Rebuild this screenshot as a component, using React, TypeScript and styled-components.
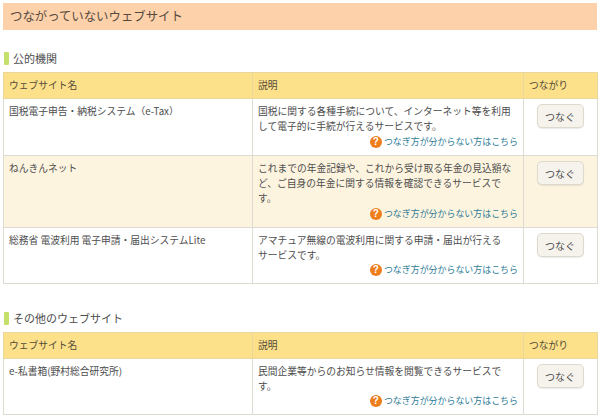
import styled, { createGlobalStyle } from 'styled-components';

const GlobalStyle = createGlobalStyle`
    html, body {
        margin: 0;
        padding: 0;
        background: #fff;
        overflow: hidden;
    }
    body {
        font-family: "Noto Sans CJK JP", "Liberation Sans", sans-serif;
        color: #4d4d4d;
    }
`;

const Wrapper = styled.div`
    width: 600px;
    height: 418px;
    padding: 3px 3px 0 3px;
    box-sizing: border-box;
    overflow: hidden;
`;

const PageTitle = styled.h1`
    margin: 0 0 19px;
    height: 27px;
    padding-left: 7px;
    background: #fdd1a9;
    font-size: 12.4px;
    font-weight: 400;
    line-height: 26px;
    color: #55493f;
`;

const SectionTitle = styled.h2`
    display: flex;
    align-items: center;
    gap: 4px;
    margin: 0;
    height: 23px;
    padding: 0 0 5px 1px;
    box-sizing: border-box;
    font-size: 11px;
    font-weight: 400;
    color: #4d4d4d;
    &::before {
        content: '';
        width: 5px;
        height: 13px;
        border-radius: 1px;
        background: #c5e06a;
    }
`;

const Table = styled.table<{ $gap?: number }>`
    width: 594px;
    margin-bottom: ${(p) => p.$gap ?? 0}px;
    border-collapse: collapse;
    table-layout: fixed;
    font-size: 9.75px;
    line-height: 15px;
`;

const HeadCell = styled.th`
    height: 26px;
    padding: 0 5px;
    box-sizing: border-box;
    background: #fde08a;
    border: 1px solid #e9d79b;
    font-weight: 400;
    text-align: left;
    color: #544b38;
`;

const Row = styled.tr<{ $tint?: boolean; $height: number }>`
    height: ${(p) => p.$height}px;
    background: ${(p) => (p.$tint ? '#fdf4e0' : '#fff')};
`;

const Cell = styled.td`
    padding: 5px 5px 0;
    border: 1px solid #dedbd3;
    vertical-align: top;
    box-sizing: border-box;
`;

const DescCell = styled(Cell)`
    padding: 0 5px;
`;

const DescInner = styled.div<{ $height: number }>`
    display: flex;
    flex-direction: column;
    height: ${(p) => p.$height}px;
    padding-top: 5px;
    box-sizing: border-box;
`;

const DescText = styled.div`
    white-space: pre-line;
`;

const HelpLink = styled.a`
    display: flex;
    align-items: center;
    justify-content: flex-end;
    gap: 2px;
    margin-top: auto;
    margin-bottom: 6px;
    color: #2f7c96;
    font-size: 8.95px;
    line-height: 14px;
`;

const HelpIcon = styled.span`
    display: flex;
    align-items: center;
    justify-content: center;
    width: 12px;
    height: 12px;
    border-radius: 50%;
    background: #ee7d1b;
    color: #fff;
    font-family: "Liberation Sans", sans-serif;
    font-size: 10px;
    font-weight: 700;
    line-height: 12px;
`;

const ButtonCell = styled(Cell)`
    padding: 5px 1px 0 0;
    text-align: center;
`;

const ConnectButton = styled.button`
    width: 47px;
    height: 24px;
    padding: 0;
    border: 1px solid #dcd9cd;
    border-radius: 5px;
    background: #f5f3ec;
    box-shadow: 0 1px 1px rgba(0, 0, 0, 0.08);
    font-family: inherit;
    font-size: 10px;
    color: #4d4d4d;
`;

type Site = {
    name: string;
    desc: string;
    height: number;
    tint?: boolean;
};

const publicSites: Site[] = [
    {
        name: '国税電子申告・納税システム（e-Tax）',
        desc: '国税に関する各種手続について、インターネット等を利用して電子的に手続が行えるサービスです。',
        height: 57,
    },
    {
        name: 'ねんきんネット',
        desc: 'これまでの年金記録や、これから受け取る年金の見込額など、ご自身の年金に関する情報を確認できるサービスです。',
        height: 72,
        tint: true,
    },
    {
        name: '総務省 電波利用 電子申請・届出システムLite',
        desc: 'アマチュア無線の電波利用に関する申請・届出が行える\nサービスです。',
        height: 56,
    },
];

const otherSites: Site[] = [
    {
        name: 'e-私書箱(野村総合研究所)',
        desc: '民間企業等からのお知らせ情報を閲覧できるサービスです。',
        height: 56,
    },
];

function SiteTable({ sites, gap }: { sites: Site[]; gap?: number }) {
    return (
        <Table $gap={gap}>
            <colgroup>
                <col width="249" />
                <col width="271" />
                <col width="74" />
            </colgroup>
            <thead>
                <tr>
                    <HeadCell>ウェブサイト名</HeadCell>
                    <HeadCell>説明</HeadCell>
                    <HeadCell>つながり</HeadCell>
                </tr>
            </thead>
            <tbody>
                {sites.map((site) => (
                    <Row key={site.name} $tint={site.tint} $height={site.height}>
                        <Cell>{site.name}</Cell>
                        <DescCell>
                            <DescInner $height={site.height - 1}>
                                <DescText>{site.desc}</DescText>
                                <HelpLink>
                                    <HelpIcon>?</HelpIcon>
                                    つなぎ方が分からない方はこちら
                                </HelpLink>
                            </DescInner>
                        </DescCell>
                        <ButtonCell>
                            <ConnectButton>つなぐ</ConnectButton>
                        </ButtonCell>
                    </Row>
                ))}
            </tbody>
        </Table>
    );
}

export default function App() {
    return (
        <Wrapper>
            <GlobalStyle />
            <PageTitle>つながっていないウェブサイト</PageTitle>
            <SectionTitle>公的機関</SectionTitle>
            <SiteTable sites={publicSites} gap={25} />
            <SectionTitle>その他のウェブサイト</SectionTitle>
            <SiteTable sites={otherSites} />
        </Wrapper>
    );
}
